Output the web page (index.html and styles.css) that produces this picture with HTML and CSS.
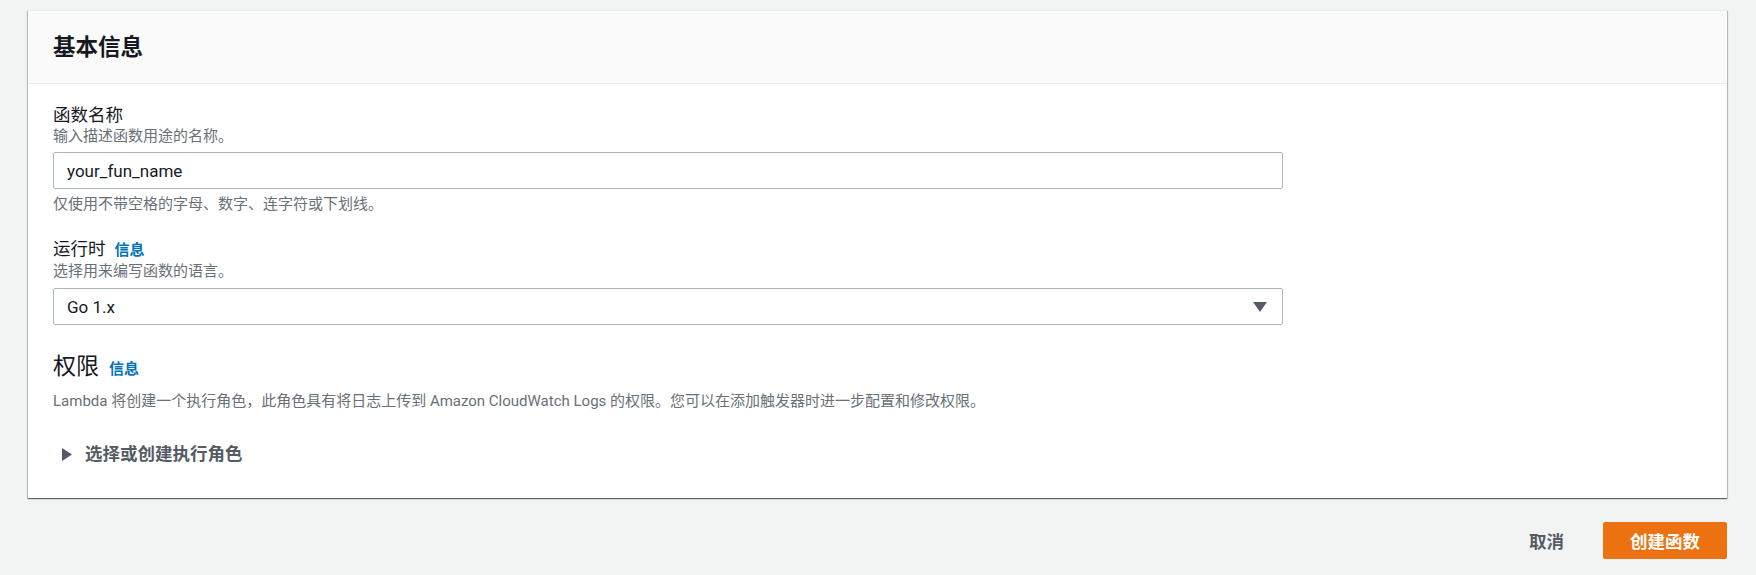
FILE: index.html
```html
<!DOCTYPE html>
<html lang="zh-CN">
<head>
<meta charset="utf-8">
<title>创建函数</title>
<link rel="stylesheet" href="styles.css">
</head>
<body>
<div class="page">
  <section class="card">
    <header class="card-header">
      <h2 class="card-title">基本信息</h2>
    </header>
    <div class="card-body">
      <div class="field">
        <div class="label">函数名称</div>
        <div class="desc">输入描述函数用途的名称。</div>
        <div class="input">your_fun_name</div>
        <div class="hint">仅使用不带空格的字母、数字、连字符或下划线。</div>
      </div>
      <div class="field field-runtime">
        <div class="label">运行时 <a class="info">信息</a></div>
        <div class="desc">选择用来编写函数的语言。</div>
        <div class="select">
          <span>Go 1.x</span>
          <svg class="caret" width="14" height="10" viewBox="0 0 14 10"><path d="M0 0H14L7 10Z" fill="#545b64"/></svg>
        </div>
      </div>
      <div class="perm">
        <div class="perm-title">权限 <a class="info">信息</a></div>
        <div class="perm-desc">Lambda 将创建一个执行角色，此角色具有将日志上传到 Amazon CloudWatch Logs 的权限。您可以在添加触发器时进一步配置和修改权限。</div>
      </div>
      <div class="expander">
        <svg class="expander-icon" width="10" height="13" viewBox="0 0 10 13"><path d="M0 0L10 6.5L0 13Z" fill="#545b64"/></svg>
        <span>选择或创建执行角色</span>
      </div>
    </div>
  </section>
  <div class="actions">
    <button class="btn-link">取消</button>
    <button class="btn-primary">创建函数</button>
  </div>
</div>
</body>
</html>
```

FILE: styles.css
```css
* { box-sizing: border-box; }
html, body { margin: 0; padding: 0; }
body {
  background: #f2f3f3;
  font-family: Roboto, "Noto Sans CJK SC", sans-serif;
  color: #16191f;
}
.page {
  padding: 10px 29px 0 28px;
  width: 1756px;
}
.card {
  background: #fff;
  box-shadow: 0 1px 1px 0 rgba(0, 28, 36, 0.45), 1px 1px 1px 0 rgba(0, 28, 36, 0.2), -1px 1px 1px 0 rgba(0, 28, 36, 0.2);
  border-top: 1px solid #eaeded;
}
.card-header {
  background: #fafafa;
  border-bottom: 1px solid #eaeded;
  height: 73px;
  display: flex;
  align-items: center;
  padding: 0 25px;
}
.card-title {
  margin: 0;
  font-size: 22.5px;
  font-weight: 700;
  line-height: 28px;
  color: #16191f;
}
.card-body {
  padding: 20px 25px 33px;
}
.label {
  font-size: 17.5px;
  line-height: 22px;
  color: #16191f;
  display: flex;
  align-items: baseline;
}
.info {
  font-size: 15px;
  font-weight: 700;
  color: #0073bb;
  margin-left: 9px;
}
.desc {
  font-size: 15px;
  line-height: 18px;
  color: #687078;
  margin-top: 1px;
}
.input, .select {
  margin-top: 7px;
  width: 1230px;
  height: 37px;
  border: 1px solid #aab7b8;
  border-radius: 2px;
  padding: 0 13px;
  font-size: 17px;
  display: flex;
  align-items: center;
  color: #16191f;
}
.select {
  justify-content: space-between;
  padding-right: 15px;
  margin-top: 8px;
}
.hint {
  font-size: 15px;
  line-height: 18px;
  color: #687078;
  margin-top: 6px;
}
.field-runtime {
  margin-top: 25px;
}
.perm {
  margin-top: 28px;
}
.perm-title {
  font-size: 23px;
  line-height: 28px;
  display: flex;
  align-items: baseline;
}
.perm-title .info {
  margin-left: 10px;
}
.perm-desc {
  margin-top: 9px;
  font-size: 15px;
  line-height: 18px;
  color: #687078;
}
.expander {
  margin-top: 33px;
  display: flex;
  align-items: center;
  padding-left: 9px;
  font-size: 17.5px;
  line-height: 22px;
  font-weight: 700;
  color: #545b64;
}
.expander-icon {
  margin-right: 13px;
}
.actions {
  margin-top: 24px;
  display: flex;
  justify-content: flex-end;
  align-items: center;
}
.btn-link, .btn-primary {
  font-family: Roboto, "Noto Sans CJK SC", sans-serif;
  font-size: 17.5px;
  font-weight: 700;
  border: none;
  height: 37px;
  cursor: pointer;
}
.btn-link {
  background: transparent;
  color: #545b64;
  padding: 0;
  margin-right: 39px;
}
.btn-primary {
  background: #ec7211;
  color: #fff;
  width: 124px;
  border-radius: 2px;
}
```
